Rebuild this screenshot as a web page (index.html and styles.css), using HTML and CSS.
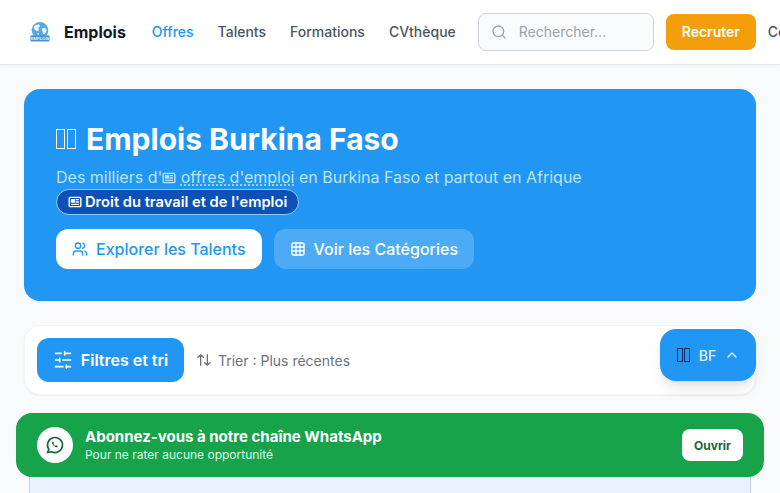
FILE: index.html
```html
<!DOCTYPE html>
<html lang="fr">
<head>
<meta charset="utf-8">
<title>Emplois Burkina Faso</title>
<link rel="stylesheet" href="styles.css">
</head>
<body>
<header class="topbar">
  <a class="brand">
    <svg class="logo" viewBox="0 0 24 24" width="20" height="20">
      <circle cx="12" cy="10" r="10" fill="#58a9e2"/>
      <path d="M5 5c2-2 4-2 6-2l1 2-2 2 1 3-3 1-3-3zM14 8l4-1 2 3-2 4-2 1-1-4zM9 13l2 1-1 2-1-1z" fill="#eef6fc"/>
      <rect x="0.5" y="16" width="23" height="7.5" rx="1.500" fill="#4a96d2"/>
      <text x="12" y="22" class="logo-text" text-anchor="middle">EMPLOIS</text>
    </svg>
    <span class="brand-name">Emplois</span>
  </a>
  <nav class="nav">
    <a class="nav-link is-active">Offres</a>
    <a class="nav-link">Talents</a>
    <a class="nav-link">Formations</a>
    <a class="nav-link">CVthèque</a>
  </nav>
  <div class="search">
    <svg class="search-icon" viewBox="0 0 24 24" width="16" height="16"><circle cx="11" cy="11" r="8"/><path d="m21 21-4.3-4.3"/></svg>
    <span class="search-text">Rechercher...</span>
  </div>
  <a class="recruit">Recruter</a>
  <a class="nav-link connect">Connexion</a>
</header>

<main class="main">
  <section class="hero">
    <h1 class="hero-title"><span class="tofu" role="img" aria-label="Burkina Faso"><i></i><i></i></span>Emplois Burkina Faso</h1>
    <p class="hero-sub">Des milliers d'<svg class="news" viewBox="0 0 24 24" width="14" height="14"><rect x="2" y="4" width="20" height="16" rx="2"/><path class="news-solid" d="M6 8h5v4H6z"/><path d="M14 8h4M14 12h4M6 16h12"/></svg> <span class="dotted">offres d'emploi</span> en Burkina Faso et partout en Afrique</p>
    <a class="chip"><svg class="news chip-icon" viewBox="0 0 24 24" width="14" height="14"><rect x="2" y="4" width="20" height="16" rx="2"/><path class="news-solid" d="M6 8h5v4H6z"/><path d="M14 8h4M14 12h4M6 16h12"/></svg>Droit du travail et de l'emploi</a>
    <div class="hero-actions">
      <a class="btn btn-white">
        <svg class="ico" viewBox="0 0 24 24" width="16" height="16"><path d="M16 21v-2a4 4 0 0 0-4-4H6a4 4 0 0 0-4 4v2"/><circle cx="9" cy="7" r="4"/><path d="M22 21v-2a4 4 0 0 0-3-3.87M16 3.13a4 4 0 0 1 0 7.75"/></svg>
        Explorer les Talents
      </a>
      <a class="btn btn-ghost">
        <svg class="ico" viewBox="0 0 24 24" width="16" height="16"><rect x="3" y="3" width="18" height="18" rx="2"/><path d="M3 9h18M3 15h18M9 3v18M15 3v18"/></svg>
        Voir les Catégories
      </a>
    </div>
  </section>

  <section class="filters">
    <a class="filter-btn">
      <svg class="ico ico-lg" viewBox="0 0 24 24" width="20" height="20"><path d="M21 4h-7M10 4H3M21 12h-9M8 12H3M21 20h-5M12 20H3M14 2v4M8 10v4M16 18v4"/></svg>
      Filtres et tri
    </a>
    <div class="sort">
      <svg class="ico" viewBox="0 0 24 24" width="16" height="16"><path d="m21 16-4 4-4-4M17 20V4M3 8l4-4 4 4M7 4v16"/></svg>
      <span>Trier : Plus récentes</span>
    </div>
  </section>

  <section class="listing"></section>
</main>

<a class="country">
  <span class="tofu tofu-small" role="img" aria-label="Burkina Faso"><i></i><i></i></span>
  <span>BF</span>
  <svg class="ico" viewBox="0 0 24 24" width="16" height="16"><path d="m18 15-6-6-6 6"/></svg>
</a>

<aside class="wa">
  <span class="wa-badge">
    <svg class="wa-icon" viewBox="0 0 24 24" width="20" height="20"><path d="M3 21l1.65-3.8a9 9 0 1 1 3.4 2.9L3 21z"/><path class="wa-fill" d="M9 8.200c-.5.4-.7 1-.6 1.700.3 1.600 2.600 4.200 4.700 4.800.8.2 1.500 0 1.900-.6.3-.4.3-.9 0-1.100l-1.300-.7c-.3-.1-.5 0-.7.2l-.4.5c-1-.3-2-1.300-2.500-2.300l.4-.5c.2-.2.2-.5.1-.7l-.6-1.300c-.2-.4-.6-.4-1-.1z"/></svg>
  </span>
  <div class="wa-copy">
    <strong class="wa-title">Abonnez-vous à notre chaîne WhatsApp</strong>
    <span class="wa-sub">Pour ne rater aucune opportunité</span>
  </div>
  <a class="wa-open">Ouvrir</a>
</aside>
</body>
</html>
```
FILE: styles.css
```css
* { box-sizing: border-box; }
html, body { height: 100%; overflow: hidden; }
body {
  margin: 0;
  background: #f8fafc;
  font-family: Inter, "Liberation Sans", sans-serif;
  color: #111827;
  position: relative;
}
a { text-decoration: none; color: inherit; }

.topbar {
  height: 65px;
  background: #fff;
  border-bottom: 1px solid #e5e7eb;
  box-shadow: 0 1px 2px rgba(0,0,0,.05);
  display: flex;
  align-items: center;
  padding: 0 0 0 30px;
  white-space: nowrap;
  overflow: hidden;
}
.brand { display: flex; align-items: center; gap: 14px; flex: none; }
.logo { display: block; }
.logo-text { font: 700 5px "Liberation Sans", sans-serif; fill: #e6f2fa; }
.brand-name { font-size: 16px; font-weight: 700; color: #111827; }
.nav { display: flex; gap: 24px; margin-left: 26px; flex: none; }
.nav-link { font-size: 14px; line-height: 20px; font-weight: 500; color: #4b5563; padding-bottom: 1px; }
.nav-link.is-active { color: #2196f3; }
.search {
  width: 176px;
  height: 38px;
  flex: none;
  margin-left: 22px;
  background: #f9fafb;
  border: 1px solid #d1d5db;
  border-radius: 8px;
  display: flex;
  align-items: center;
  padding: 0 0 1px 12px;
  gap: 12px;
  font-size: 14px;
  color: #9ca3af;
}
.search-icon { fill: none; stroke: #9ca3af; stroke-width: 2; stroke-linecap: round; stroke-linejoin: round; }
.recruit {
  flex: none;
  margin-left: 12px;
  width: 90px;
  height: 36px;
  padding-bottom: 1px;
  border-radius: 8px;
  background: #f59e0b;
  color: #fff;
  font-size: 14px;
  font-weight: 600;
  display: flex;
  align-items: center;
  justify-content: center;
}
.connect { flex: none; margin-left: 12px; }

.main { padding: 24px 24px 0; }
.hero {
  height: 212px;
  border-radius: 16px;
  background: #2196f3;
  color: #fff;
  padding: 32px;
  box-shadow: 0 1px 2px rgba(0,0,0,.05);
}
.hero-title { margin: 0; font-size: 30px; line-height: 36px; font-weight: 700; display: flex; align-items: center; }
.tofu { display: inline-flex; gap: 2px; margin-right: 10px; flex: none; }
.tofu i { display: block; width: 9px; height: 20px; border: 1px solid currentColor; }
.tofu-small { gap: 1px; margin: 0 1px 0 1px; color: #0b2a66; }
.tofu-small i { width: 6px; height: 14px; }
.hero-sub { margin: 8px 0 0; font-size: 16px; line-height: 24px; color: #bfe3fd; }
.news { fill: none; stroke: currentColor; stroke-width: 2.4; stroke-linecap: round; stroke-linejoin: round; vertical-align: -2px; }
.news-solid { fill: currentColor; }
.dotted { text-decoration: underline dotted; text-underline-offset: 2px; }
.chip {
  display: inline-flex;
  align-items: center;
  gap: 3px;
  height: 26px;
  padding: 0 11px;
  border-radius: 13px;
  background: #0d50b8;
  border: 1px solid #90caf9;
  color: #fff;
  font-size: 14.7px;
  font-weight: 600;
  vertical-align: top;
}
.chip-icon { flex: none; }
.hero-actions { display: flex; gap: 12px; margin-top: 14px; }
.btn {
  height: 40px;
  border-radius: 12px;
  padding: 0 16px;
  display: flex;
  align-items: center;
  gap: 8px;
  font-size: 16px;
  font-weight: 500;
}
.btn-white { background: #fff; color: #2196f3; }
.btn-ghost { background: #4dabf5; color: #fff; }
.ico { fill: none; stroke: currentColor; stroke-width: 2; stroke-linecap: round; stroke-linejoin: round; flex: none; }

.filters {
  margin-top: 24px;
  height: 70px;
  background: #fff;
  border: 1px solid #f3f4f6;
  border-radius: 16px;
  box-shadow: 0 1px 2px rgba(0,0,0,.05);
  display: flex;
  align-items: center;
  padding: 0 12px;
  gap: 12px;
}
.filter-btn {
  width: 147px;
  height: 44px;
  border-radius: 12px;
  background: #2196f3;
  color: #fff;
  font-size: 16px;
  font-weight: 600;
  display: flex;
  align-items: center;
  justify-content: center;
  gap: 8px;
}
.sort { display: flex; align-items: center; gap: 6px; font-size: 14px; color: #6b7280; }

.listing {
  margin: 24px 5px 0;
  height: 120px;
  background: #e8f1fd;
  border: 1px solid #cbd5e1;
  border-radius: 8px;
}

.country {
  position: absolute;
  left: 660px;
  top: 329px;
  width: 96px;
  height: 52px;
  border-radius: 16px;
  background: #2196f3;
  color: #e3f2fd;
  font-size: 14px;
  font-weight: 500;
  display: flex;
  align-items: center;
  justify-content: center;
  gap: 8px;
  box-shadow: 0 10px 15px -3px rgba(0,0,0,.1), 0 4px 6px -4px rgba(0,0,0,.1);
}

.wa {
  position: absolute;
  left: 16px;
  top: 413px;
  width: 748px;
  height: 64px;
  border-radius: 16px;
  background: #16a34a;
  color: #fff;
  display: flex;
  align-items: center;
  padding: 0 21px;
  gap: 12px;
}
.wa-badge {
  width: 36px;
  height: 36px;
  border-radius: 50%;
  background: #fff;
  flex: none;
  display: flex;
  align-items: center;
  justify-content: center;
}
.wa-icon { fill: none; stroke: #166534; stroke-width: 2; stroke-linejoin: round; }
.wa-fill { fill: #166534; stroke: none; }
.wa-copy { display: flex; flex-direction: column; flex: 1; }
.wa-title { font-size: 15px; line-height: 20px; font-weight: 700; }
.wa-sub { font-size: 12px; line-height: 16px; color: #dcfce7; }
.wa-open {
  width: 61px;
  height: 32px;
  border-radius: 8px;
  background: #fff;
  color: #166534;
  font-size: 12px;
  font-weight: 700;
  display: flex;
  align-items: center;
  justify-content: center;
}
```
